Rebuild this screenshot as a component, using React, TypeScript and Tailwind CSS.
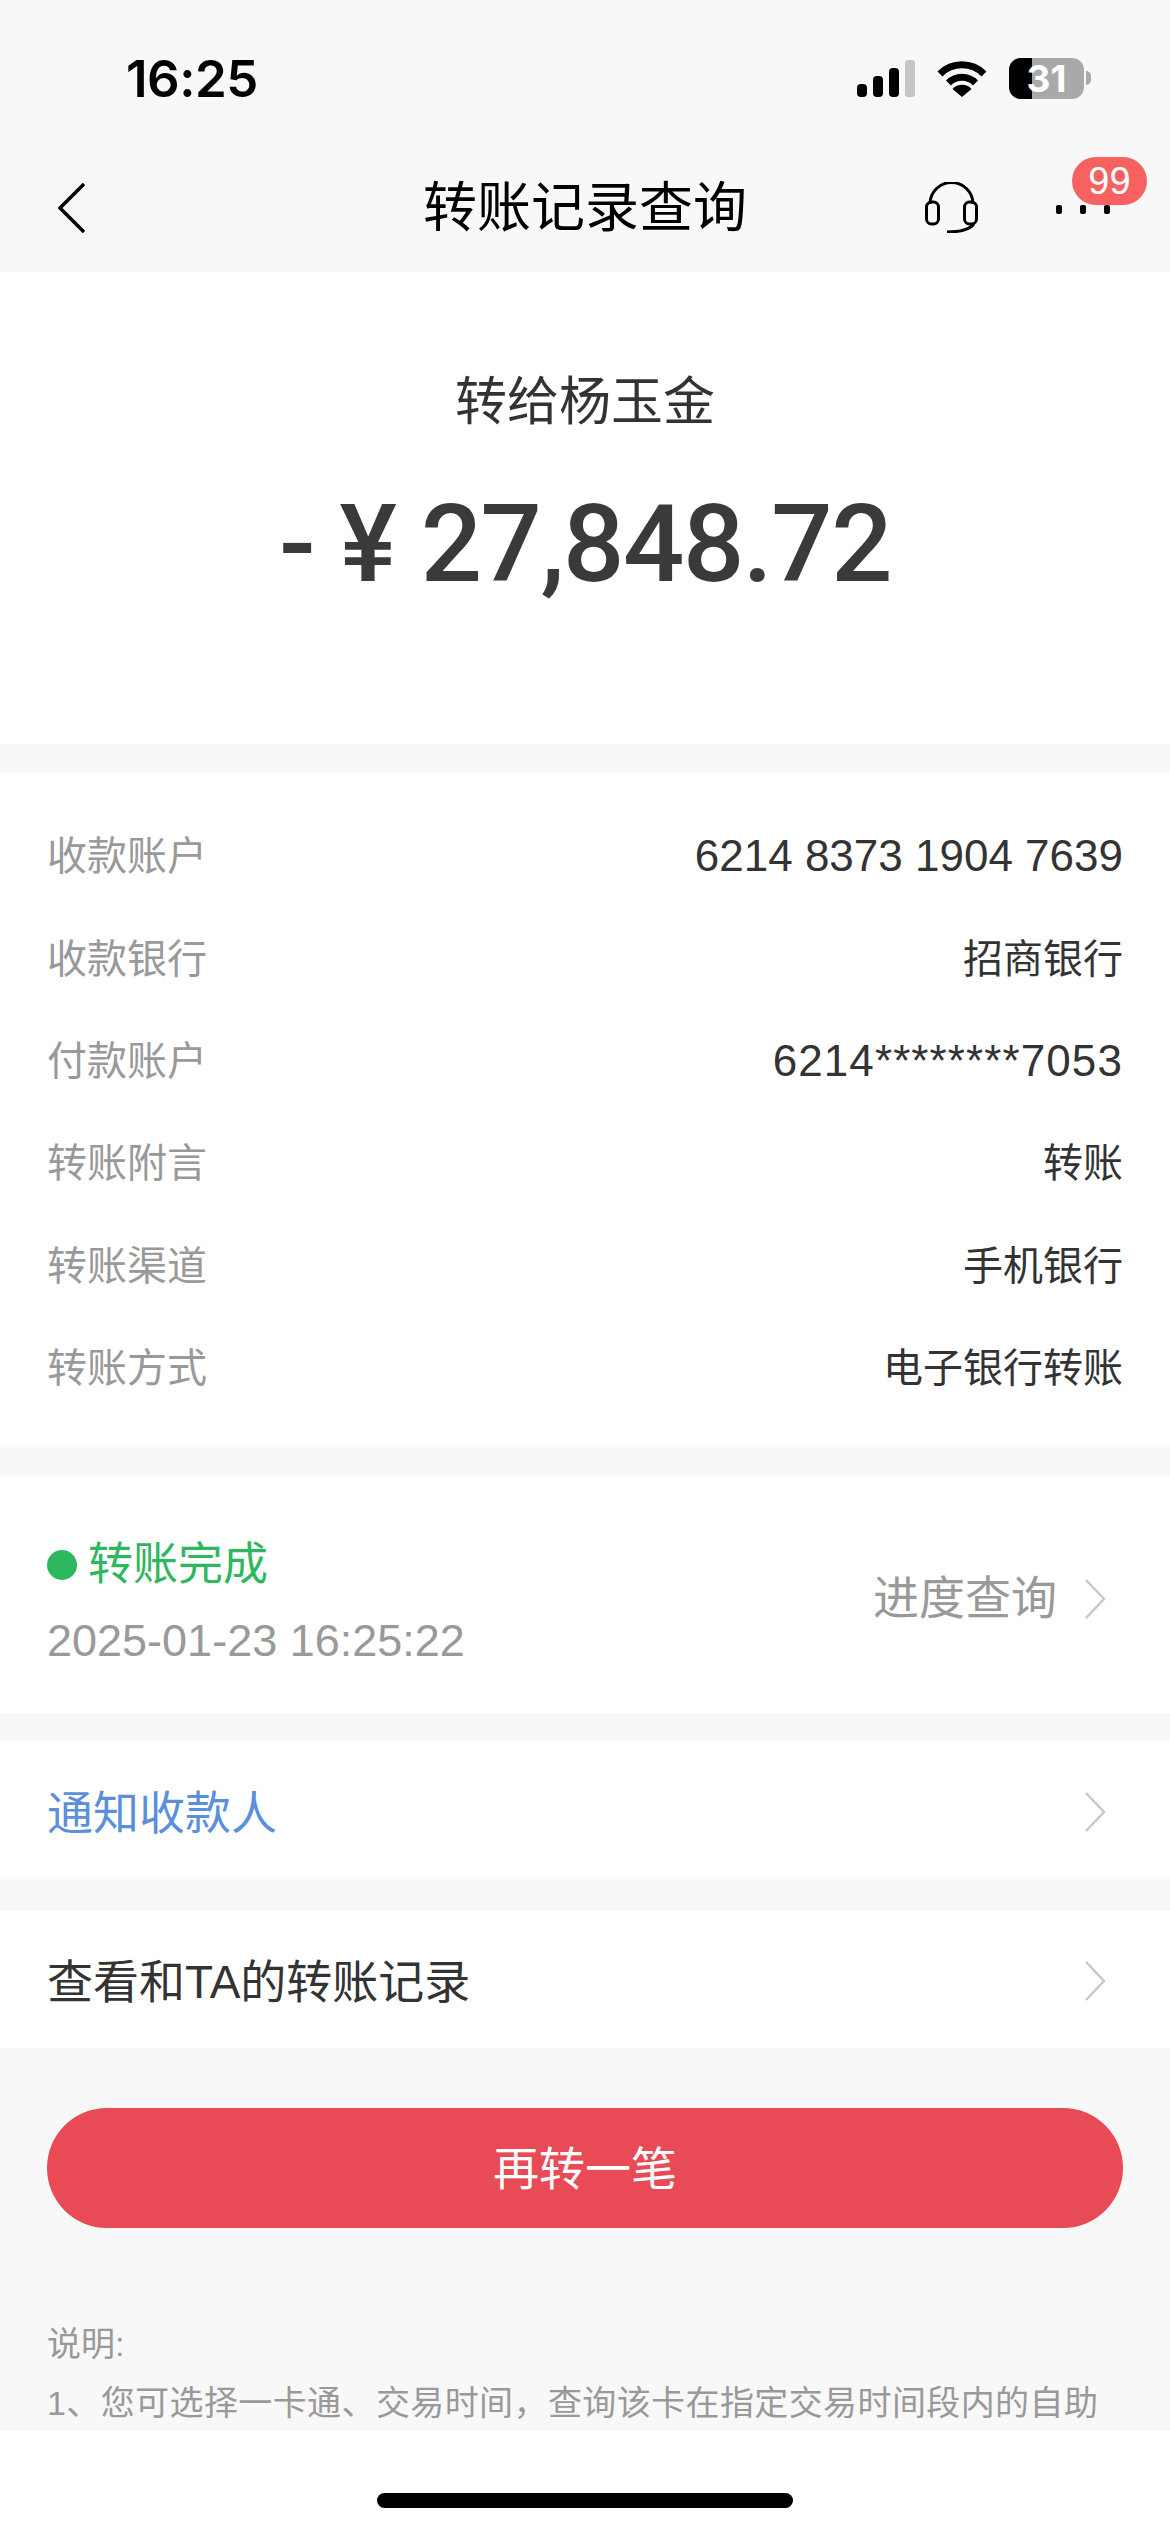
import { ReactNode } from "react";

const details = [
    ["收款账户", "6214 8373 1904 7639", "text-[44px]"],
    ["收款银行", "招商银行", "text-[40px]"],
    ["付款账户", "6214********7053", "text-[44px] tracking-[1.1px]"],
    ["转账附言", "转账", "text-[40px]"],
    ["转账渠道", "手机银行", "text-[40px]"],
    ["转账方式", "电子银行转账", "text-[40px]"],
];

function Chevron() {
    return (
        <svg width="22" height="40" viewBox="0 0 22 40" fill="none" stroke="#c8c8c8" strokeWidth="2.5">
            <path d="M2 1 L20 20 L2 39" />
        </svg>
    );
}

function LinkRow({ children, className }: { children: ReactNode; className: string }) {
    return (
        <div className="flex h-[138px] items-center justify-between bg-white pl-[47px] pr-[64px]">
            <span className={`pt-[6px] ${className}`}>{children}</span>
            <div className="pt-[3px]">
                <Chevron />
            </div>
        </div>
    );
}

function StatusBar() {
    return (
        <div className="flex h-[140px] items-center justify-between pl-[126px] pr-[79px] pt-4">
            <span className="font-['Inter',sans-serif] text-[51px] font-semibold leading-none tracking-[-0.5px] text-black">16:25</span>
            <div className="flex items-center gap-[22px]">
                <svg width="58" height="37" viewBox="0 0 58 37">
                    <rect x="0" y="24" width="10" height="13" rx="4" fill="#000" />
                    <rect x="16" y="16" width="10" height="21" rx="4" fill="#000" />
                    <rect x="32" y="8" width="10" height="29" rx="4" fill="#000" />
                    <rect x="48" y="0" width="10" height="37" rx="3" fill="#c7c7c7" />
                </svg>
                <svg width="50" height="37" viewBox="0 0 50 37" fill="none" stroke="#000">
                    <path d="M3 14 A31 31 0 0 1 47 14" strokeWidth="7" />
                    <path d="M11.5 23 A19 19 0 0 1 38.5 23" strokeWidth="7" />
                    <path d="M25 37 L15.5 29 A13 13 0 0 1 34.5 29 Z" fill="#000" stroke="none" />
                </svg>
                <div className="flex items-center gap-[2px]">
                    <div className="relative h-[41px] w-[75px]">
                        <div className="flex h-full overflow-hidden rounded-[12px] bg-[#a9a9a9]">
                            <div className="h-full w-[23px] bg-black" />
                        </div>
                        <span className="absolute inset-0 flex items-center justify-center font-['Inter',sans-serif] text-[37px] font-bold leading-none text-white">31</span>
                    </div>
                    <div className="h-[14px] w-[5px] rounded-r-full bg-[#a9a9a9]" />
                </div>
            </div>
        </div>
    );
}

function NavBar() {
    return (
        <div className="grid h-[132px] grid-cols-[1fr_auto_1fr] items-center pt-[3px]">
            <div className="pl-[58px]">
                <svg width="27" height="50" viewBox="0 0 27 50" fill="none" stroke="#000" strokeWidth="3.5">
                    <path d="M26 1 L2 25 L26 49" />
                </svg>
            </div>
            <div className="text-[54px] leading-none text-black">转账记录查询</div>
            <div className="flex items-center justify-end gap-[78px] pr-[60px]">
                <svg width="53" height="51" viewBox="0 0 53 51" fill="none" stroke="#000" strokeWidth="3">
                    <path d="M5 22 A21.5 21.5 0 0 1 48 22" />
                    <rect x="1.5" y="20" width="12" height="22" rx="5" />
                    <rect x="39.5" y="20" width="12" height="22" rx="5" />
                    <path d="M22 50 C35 50 45 47 49 42" />
                </svg>
                <div className="relative flex w-[54px] justify-between pt-[3px]">
                    <span className="h-[9px] w-[6px] rounded-[2px] bg-black" />
                    <span className="h-[9px] w-[6px] rounded-[2px] bg-black" />
                    <span className="h-[9px] w-[6px] rounded-[2px] bg-black" />
                    <span className="absolute left-[16px] top-[-45px] flex h-[48px] w-[75px] items-center justify-center rounded-full bg-[#f76260] font-['Liberation_Sans',sans-serif] text-[38px] leading-none text-white">99</span>
                </div>
            </div>
        </div>
    );
}

export default function App() {
    return (
        <div className="flex h-[2532px] w-[1170px] flex-col overflow-hidden bg-[#f8f8f8] font-['Liberation_Sans','Noto_Sans_CJK_SC',sans-serif]">
            <StatusBar />
            <NavBar />

            <div className="min-h-0 flex-1 overflow-hidden">
                <div className="flex h-[472px] flex-col items-center bg-white pt-[105px] text-[#333]">
                    <div className="text-[52px] leading-[50px]">转给杨玉金</div>
                    <div className="mt-[59px] font-['Roboto',sans-serif] text-[108px] font-medium leading-[116px] tracking-[-1.5px] text-[#3a3a3a]">- ¥ 27,848.72</div>
                </div>

                <div className="mt-[29px] bg-white pb-[28px] pl-[47px] pr-[47px] pt-[32px]">
                    {details.map(([label, value, size]) => (
                        <div key={label} className="flex h-[102.4px] items-center justify-between">
                            <span className="text-[40px] text-[#999]">{label}</span>
                            <span className={`${size} text-[#333]`}>{value}</span>
                        </div>
                    ))}
                </div>

                <div className="mt-[29px] flex h-[237px] items-center justify-between bg-white pl-[47px] pr-[64px]">
                    <div className="flex flex-col gap-[23px] pt-[13px]">
                        <div className="flex items-center gap-[11px]">
                            <span className="h-[30px] w-[30px] rounded-full bg-[#2db860]" />
                            <span className="text-[45px] leading-[56px] text-[#2db860]">转账完成</span>
                        </div>
                        <span className="text-[45px] leading-[50px] text-[#999]">2025-01-23 16:25:22</span>
                    </div>
                    <div className="flex items-center gap-[27px] pt-[8px]">
                        <span className="text-[46px] text-[#999]">进度查询</span>
                        <Chevron />
                    </div>
                </div>

                <div className="mt-[28px]">
                    <LinkRow className="text-[46px] text-[#5b8fdc]">通知收款人</LinkRow>
                </div>
                <div className="mt-[31px]">
                    <LinkRow className="text-[46px] text-[#333]">查看和TA的转账记录</LinkRow>
                </div>

                <div className="px-[47px] pt-[60px]">
                    <button className="flex h-[120px] w-full items-center justify-center rounded-full bg-[#e84a56] pt-[3px] text-[46px] text-white">再转一笔</button>
                </div>

                <div className="px-[47px] pt-[87px] text-[34px] leading-[59px] text-[#999]">
                    <div>说明:</div>
                    <div className="whitespace-nowrap tracking-[0.4px]">1、您可选择一卡通、交易时间，查询该卡在指定交易时间段内的自助</div>
                </div>
            </div>

            <div className="flex h-[102px] shrink-0 justify-center bg-white pt-[63px]">
                <div className="h-[15px] w-[416px] rounded-full bg-black" />
            </div>
        </div>
    );
}
